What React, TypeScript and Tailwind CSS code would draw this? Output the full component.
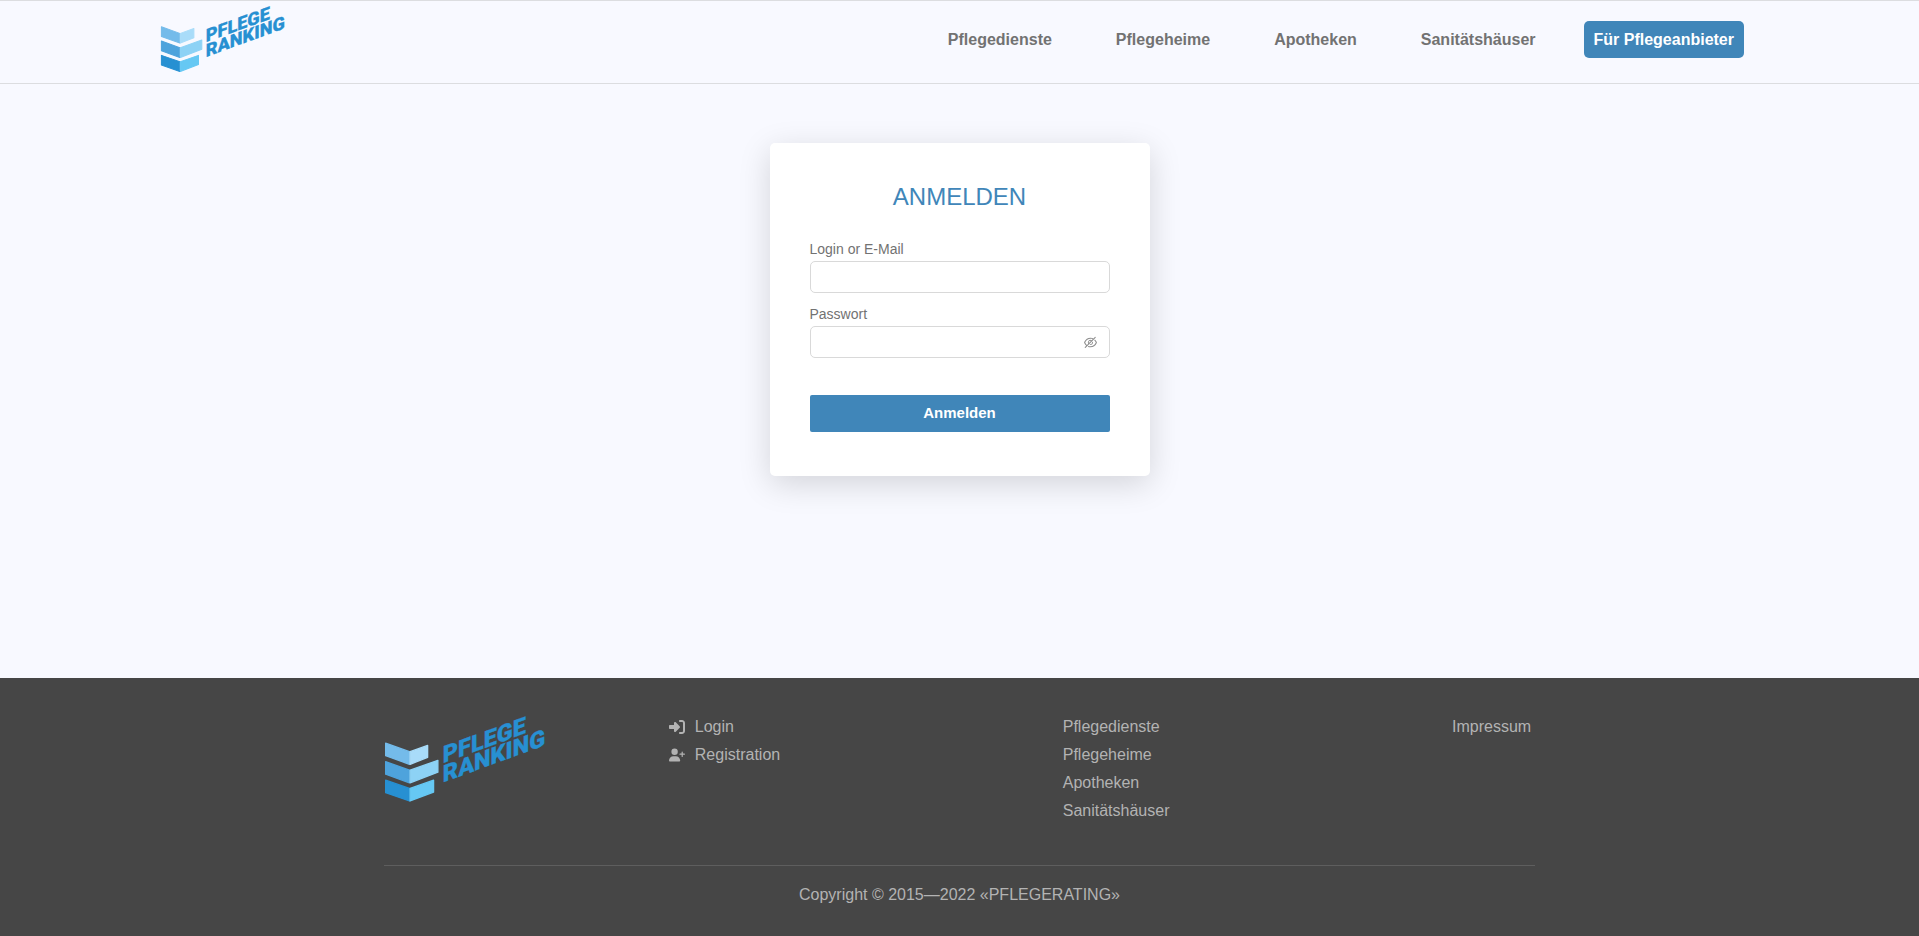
import { useState } from "react";
import { AiOutlineEye, AiOutlineEyeInvisible } from "react-icons/ai";
import { FaRightToBracket, FaUserPlus } from "react-icons/fa6";

const categories = ["Pflegedienste", "Pflegeheime", "Apotheken", "Sanitätshäuser"];

function Logo({ className }: { className: string }) {
  return (
    <svg
      viewBox="-3 -1 484 266"
      className={`overflow-visible ${className}`}
      role="img"
      aria-label="Pflege Ranking"
    >
      <g strokeWidth="4" strokeLinejoin="round">
        <path d="M2 84 74 110V148L2 122Z" fill="#74bbea" stroke="#74bbea" />
        <path d="M76 110 129 91V127L76 148Z" fill="#a9dcf9" stroke="#a9dcf9" />
        <path d="M2 140 74 166V204L2 178Z" fill="#4ea3dc" stroke="#4ea3dc" />
        <path d="M76 166 160 136V172L76 204Z" fill="#8dd2f5" stroke="#8dd2f5" />
        <path d="M2 196 74 221V259L2 234Z" fill="#2790d2" stroke="#2790d2" />
        <path d="M76 221 147 196V232L76 259Z" fill="#66c8f3" stroke="#66c8f3" />
      </g>
      <g
        className="font-['Roboto',sans-serif] font-black"
        fill="#2790d2"
        stroke="#2790d2"
        strokeWidth="1"
        fontSize="71"
      >
        <text transform="translate(175 145) skewY(-20)">PFLEGE</text>
        <text transform="translate(175 203) skewY(-20)">RANKING</text>
      </g>
    </svg>
  );
}

function Header() {
  return (
    <header className="border-y border-[#dcdde0]">
      <div className="flex h-[82px] items-start justify-between pl-40 pr-[175px]">
        <a href="#" className="pt-1">
          <Logo className="h-[68px] w-[124px]" />
        </a>
        <nav className="flex items-center gap-12 pt-5 text-base font-bold">
          <ul className="flex gap-16">
            {categories.map((name) => (
              <li key={name}>
                <a href="#" className="text-[#727272]">
                  {name}
                </a>
              </li>
            ))}
          </ul>
          <a
            href="#"
            className="flex h-[37px] items-center rounded-[5px] bg-[#4086b9] px-[10px] text-white"
          >
            Für Pflegeanbieter
          </a>
        </nav>
      </div>
    </header>
  );
}

function LoginForm() {
  const [visible, setVisible] = useState(false);
  return (
    <form
      onSubmit={(e) => e.preventDefault()}
      className="w-[380px] rounded-[5px] bg-white px-10 pb-11 pt-9 shadow-[0_8px_32px_rgba(0,0,0,0.15)]"
    >
      <h1 className="text-center text-2xl leading-9 text-[#4086b9]">ANMELDEN</h1>
      <div className="mt-6 flex flex-col text-sm text-[#727272]">
        <label htmlFor="login" className="pb-0.5 leading-5">
          Login or E-Mail
        </label>
        <input
          id="login"
          type="text"
          className="h-8 rounded-[5px] border border-[#d9d9d9] px-3 outline-none focus:border-[#4086b9]"
        />
        <label htmlFor="password" className="mt-[11px] pb-0.5 leading-5">
          Passwort
        </label>
        <div className="flex h-8 items-center rounded-[5px] border border-[#d9d9d9] px-[11px] focus-within:border-[#4086b9]">
          <input
            id="password"
            type={visible ? "text" : "password"}
            className="min-w-0 flex-1 outline-none"
          />
          <button
            type="button"
            aria-label={visible ? "Passwort verbergen" : "Passwort anzeigen"}
            onClick={() => setVisible(!visible)}
            className="text-[#8c8c8c]"
          >
            {visible ? <AiOutlineEye size={15} /> : <AiOutlineEyeInvisible size={15} />}
          </button>
        </div>
      </div>
      <button
        type="submit"
        className="mt-[37px] h-[37px] w-full rounded-[2px] bg-[#4086b9] text-[15px] font-bold text-white"
      >
        Anmelden
      </button>
    </form>
  );
}

function Footer() {
  return (
    <footer className="bg-[#464646] text-base text-[#b3b3b3]">
      <div className="mx-auto w-3/5">
        <div className="flex h-[188px] items-start border-b border-[#5e5e5e] pt-[35px]">
          <a href="#" className="mr-[125px] pt-[2px]">
            <Logo className="h-[88px] w-40" />
          </a>
          <div className="flex flex-1 justify-between pr-1 leading-7">
            <ul>
              <li>
                <a href="#" className="flex items-center gap-[10px]">
                  <FaRightToBracket size={16} />
                  Login
                </a>
              </li>
              <li>
                <a href="#" className="flex items-center gap-[10px]">
                  <FaUserPlus size={16} />
                  Registration
                </a>
              </li>
            </ul>
            <ul>
              {categories.map((name) => (
                <li key={name}>
                  <a href="#">{name}</a>
                </li>
              ))}
            </ul>
            <a href="#">Impressum</a>
          </div>
        </div>
        <p className="pb-[29px] pt-[17px] text-center leading-6">
          Copyright © 2015—2022 «PFLEGERATING»
        </p>
      </div>
    </footer>
  );
}

export default function App() {
  return (
    <div className="flex min-h-screen flex-col bg-[#f8f9ff] font-['Liberation_Sans',Arial,sans-serif]">
      <Header />
      <main className="flex flex-1 items-start justify-center pb-16 pt-[59px]">
        <LoginForm />
      </main>
      <Footer />
    </div>
  );
}
